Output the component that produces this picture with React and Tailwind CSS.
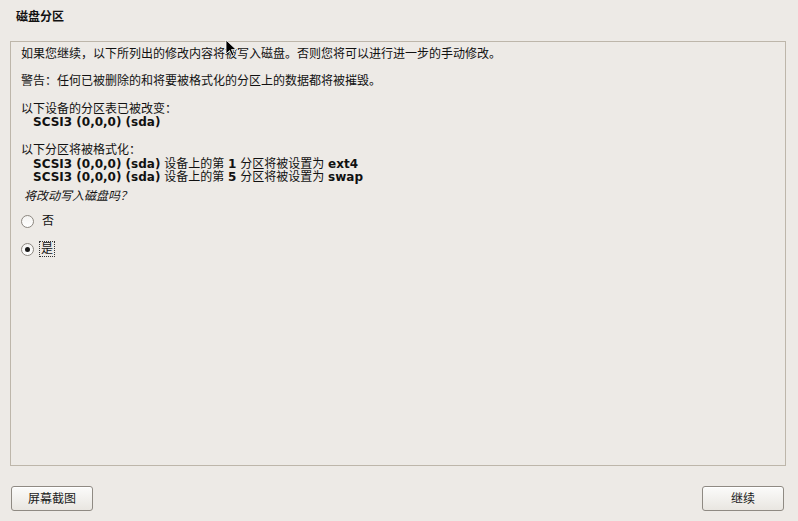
import React from "react";

const font = { fontFamily: '"DejaVu Sans", "Noto Sans CJK SC", sans-serif' };

function Radio({ checked }) {
  return (
    <span className="relative inline-flex h-[13px] w-[13px] items-center justify-center rounded-full border border-[#8c8780] bg-gradient-to-b from-[#f4f3f1] to-[#ffffff]">
      {checked && <span className="h-[5px] w-[5px] rounded-full bg-[#1a1a1a]" />}
    </span>
  );
}

function Btn({ children }) {
  return (
    <button className="flex h-[25px] w-[82px] items-center justify-center rounded-[3px] border border-[#8f8a83] bg-gradient-to-b from-[#fbfbfa] to-[#e9e6e1] text-[12px] leading-[14px] text-[#1a1a1a] shadow-[inset_0_1px_0_#ffffff]">
      {children}
    </button>
  );
}

export default function App() {
  return (
    <div
      className="relative flex h-[521px] w-[798px] flex-col bg-[#edeae6] text-[12px] leading-[14px] text-[#111]"
      style={font}
    >
      <div className="pl-[16px] pt-[10px] h-[41px] font-bold text-[12px] leading-[14px]">磁盘分区</div>

      <div className="mx-[10px] h-[425px] w-[776px] border border-[#bdb6aa] bg-[#edeae6] pl-[10px] pt-[5px]">
        <div className="leading-[14px]">如果您继续，以下所列出的修改内容将被写入磁盘。否则您将可以进行进一步的手动修改。</div>
        <div className="mt-[13px] leading-[14px]">警告：任何已被删除的和将要被格式化的分区上的数据都将被摧毁。</div>
        <div className="mt-[14px] leading-[14px]">以下设备的分区表已被改变：</div>
        <div className="pl-[12px] font-bold leading-[13px]">SCSI3 (0,0,0) (sda)</div>
        <div className="mt-[14px] leading-[14px]">以下分区将被格式化：</div>
        <div className="pl-[12px] leading-[14px]">
          <span className="font-bold">SCSI3 (0,0,0) (sda)</span> 设备上的第 <span className="font-bold">1</span> 分区将被设置为 <span className="font-bold">ext4</span>
        </div>
        <div className="pl-[12px] leading-[13px]">
          <span className="font-bold">SCSI3 (0,0,0) (sda)</span> 设备上的第 <span className="font-bold">5</span> 分区将被设置为 <span className="font-bold">swap</span>
        </div>
        <div className="mt-[5px] pl-[3px] italic leading-[14px]">将改动写入磁盘吗？</div>
        <div className="mt-[11px] flex items-center gap-[6px] h-[14px]">
          <Radio />
          <span className="px-[2px]">否</span>
        </div>
        <div className="mt-[13px] flex items-center gap-[5px] h-[16px]">
          <Radio checked />
          <span className="border border-dotted border-[#333] px-[1px] leading-[14px]">是</span>
        </div>
      </div>

      <div className="mt-[20px] flex justify-between pl-[11px] pr-[14px]">
        <Btn>屏幕截图</Btn>
        <Btn>继续</Btn>
      </div>

      <svg
        className="absolute left-[225px] top-[39px]"
        width="12"
        height="18"
        viewBox="0 0 12 18"
      >
        <path d="M1 1 L1 15 L4.5 11.5 L7 17 L9 16 L6.5 10.5 L11 10.5 Z" fill="#000" stroke="#fff" strokeWidth="0.8" />
      </svg>
    </div>
  );
}
